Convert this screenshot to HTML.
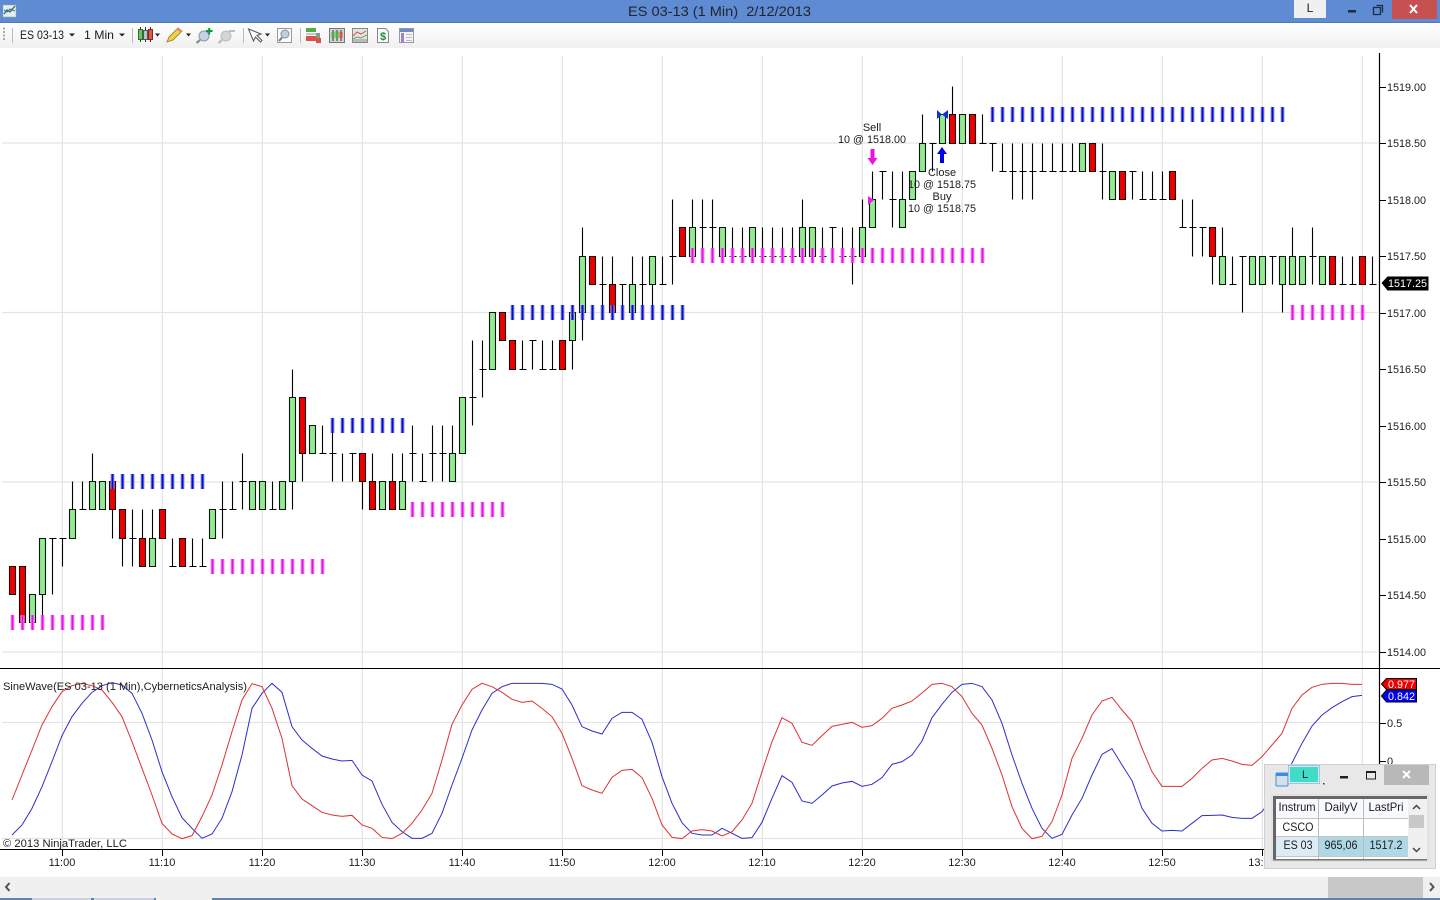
<!DOCTYPE html>
<html lang="en">
<head>
<meta charset="utf-8">
<title>ES 03-13 (1 Min) 2/12/2013</title>
<style>
html,body{margin:0;padding:0;background:#fff;width:1440px;height:900px;overflow:hidden}
svg{position:absolute;left:0;top:0;display:block}
text{font-family:"Liberation Sans",Arial,sans-serif;font-size:11px;fill:#1c1c1c}
.p text{font-size:11px;fill:#1c1c1c}
.t text{font-size:11px;fill:#1c1c1c;text-anchor:middle}
.a text{font-size:11px;fill:#1c1c1c;text-anchor:middle}
.w text{font-size:12px;fill:#1c1c1c;text-anchor:middle}
</style>
</head>
<body>
<svg width="1440" height="900" viewBox="0 0 1440 900" xmlns="http://www.w3.org/2000/svg">
<defs>
<linearGradient id="tb" x1="0" y1="0" x2="0" y2="1"><stop offset="0" stop-color="#ffffff"/><stop offset="1" stop-color="#f0f0f0"/></linearGradient>
</defs>

<!-- window chrome -->
<rect width="1440" height="900" fill="#fff"/>
<rect width="1440" height="22" fill="#5f8bd2"/>
<rect y="22" width="1440" height="1" fill="#5578b0"/>
<rect y="23" width="1440" height="25" fill="url(#tb)"/>
<text x="628" y="16" textLength="183" lengthAdjust="spacingAndGlyphs" style="font-size:14px;fill:#20262e">ES 03-13 (1 Min)&#160;&#160;2/12/2013</text>
<!-- app icon -->
<rect x="3" y="5" width="13" height="12" fill="#e8eef0" stroke="#8aa" stroke-width=".5"/>
<path d="M4 14l3-4 3 2 5-6" fill="none" stroke="#2f7f4f" stroke-width="1.4"/>
<path d="M4 10l3 2 3-3 5 2" fill="none" stroke="#3b6aa5" stroke-width="1"/>
<!-- title buttons -->
<rect x="1294" y="0" width="32" height="18" fill="#f0f0f0"/>
<text x="1310" y="12" text-anchor="middle" style="font-size:12px;fill:#222">L</text>
<rect x="1348" y="10" width="8" height="2.500" fill="#1d2b45"/>
<path d="M1376.500 5.500h6v7M1373.500 7.500h7v7h-7z" fill="none" stroke="#1d2b45" stroke-width="1.300"/>
<rect x="1392" y="0" width="45" height="19" fill="#c75050"/>
<path d="M1410 5l7 8M1417 5l-7 8" stroke="#fff" stroke-width="2" fill="none"/>

<!-- toolbar -->
<path d="M4 27.500v14" stroke="#aaa" stroke-width="2" stroke-dasharray="2 1.500" fill="none"/>
<path d="M12.500 28v15M132.500 28v15M243.500 28v15M300.500 28v15" stroke="#bbb" fill="none"/>
<text x="20" y="39" textLength="44" lengthAdjust="spacingAndGlyphs" style="font-size:12px">ES 03-13</text>
<path d="M69 33.500h6l-3 3z" fill="#222"/>
<text x="84" y="39" textLength="30" lengthAdjust="spacingAndGlyphs" style="font-size:12px">1 Min</text>
<path d="M119 33.500h6l-3 3z" fill="#222"/>
<!-- candles -->
<path d="M140.500 27v15M145.500 27v15M150.500 27v15" stroke="#333"/>
<rect x="138.500" y="29.500" width="4" height="10" fill="#62c95a" stroke="#2f6d2f"/>
<rect x="143.500" y="30.500" width="4" height="9" fill="#b9c4c9" stroke="#555"/>
<rect x="148.500" y="29.500" width="4" height="10" fill="#e4564a" stroke="#7a2a22"/>
<path d="M155 33.500h5l-2.500 3z" fill="#222"/>
<!-- pencil -->
<path d="M167 42l2-5 9-9 4 3-9 9z" fill="#f4d03f" stroke="#8a7a30" stroke-width=".8"/>
<path d="M178 28l4 3-1.500 1.500-4-3z" fill="#e58a7a"/>
<path d="M186 33.500h5l-2.500 3z" fill="#222"/>
<!-- zoom in -->
<circle cx="204" cy="36" r="5" fill="#c3d4e4" stroke="#8a9aaa"/>
<path d="M200 40l-3.500 3" stroke="#8a8f96" stroke-width="2.200"/>
<path d="M206 31h6.500M209.200 28v6.500" stroke="#0a9a3a" stroke-width="2"/>
<!-- zoom out -->
<circle cx="226" cy="36" r="5" fill="#d4d4d4" stroke="#bbb"/>
<path d="M222 40l-3.500 3" stroke="#bbb" stroke-width="2.200"/>
<path d="M229 31h6" stroke="#aaa" stroke-width="1.500"/>
<!-- arrow -->
<path d="M248.500 29l5 12 2-4 5 5 1.500-1.500-5-5 4-1.500z" fill="#fff" stroke="#555" stroke-width="1"/>
<path d="M265 33.500h5l-2.500 3z" fill="#222"/>
<!-- box magnifier -->
<rect x="277.500" y="28.500" width="14" height="14" fill="#fbfbfb" stroke="#999"/>
<circle cx="285" cy="34" r="4" fill="#bdd0e2" stroke="#7f93a8"/>
<path d="M282 37.500l-3 3.500" stroke="#777" stroke-width="2"/>
<!-- chart icons -->
<rect x="306" y="28" width="10" height="4" fill="#4fb04a"/>
<rect x="306" y="36" width="10" height="5" fill="#d9534a"/>
<path d="M306 34h10" stroke="#999"/>
<rect x="316" y="33" width="4" height="6" fill="#8a9a8a"/>
<rect x="316" y="38" width="5" height="5" fill="#d9534a"/>
<rect x="329.500" y="28.500" width="15" height="14" fill="#d4d4d4" stroke="#777"/>
<path d="M333 30v11M337 30v11M341 30v11" stroke="#333"/>
<rect x="331.500" y="32" width="3" height="6" fill="#4fb04a"/><rect x="335.500" y="31" width="3" height="7" fill="#4fb04a"/><rect x="339.500" y="32" width="3" height="6" fill="#d9534a"/>
<rect x="352.500" y="28.500" width="15" height="14" fill="#e4e4e4" stroke="#888"/>
<path d="M353 36l4-4 4 2 5-3" stroke="#d9534a" fill="none"/>
<path d="M353 39l4-2 4 1 6-3" stroke="#6aa86a" fill="none"/>
<rect x="353" y="39" width="14" height="3" fill="#bbb"/>
<path d="M377.500 28.500h8l3 3v11h-11z" fill="#fafafa" stroke="#888"/>
<text x="383" y="40" text-anchor="middle" style="font-size:11px;font-weight:bold;fill:#1c8a3a">$</text>
<rect x="399.500" y="28.500" width="14" height="14" fill="#f4f4f4" stroke="#99a"/>
<rect x="400" y="29" width="13" height="3" fill="#6a8ac8"/>
<rect x="401" y="33" width="3" height="9" fill="#a080d0"/>
<path d="M406 34.500h6M406 37.500h6M406 40.500h6" stroke="#bbb"/>

<!-- grid -->
<g stroke="#e4e4e4" stroke-width="1.200" fill="none">
<path d="M62.300 56V849M162.300 56V849M262.300 56V849M362.300 56V849M462.300 56V849M562.300 56V849M662.300 56V849M762.300 56V849M862.300 56V849M962.300 56V849M1062.300 56V849M1162.300 56V849M1262.300 56V849M1362.300 56V849"/>
<path d="M2 143H1378M2 312.500H1378M2 482H1378M2 652H1378M2 722.500H1378M2 838.500H1378"/>
</g>

<!-- bars -->
<g transform="translate(.5 .5)">
<path fill="none" stroke="#000" stroke-width="1.100" d="M42 538V622M52 538V594M49 538h7M62 538V566M59 538h7M72 481V509M82 481V509M79 509h7M92 453V481M112 509V538M122 538V566M132 509V566M129 538h7M142 509V538M152 509V538M172 538V566M169 566h7M192 538V566M189 566h7M202 538V566M199 566h7M222 481V538M219 509h7M232 481V509M229 509h7M242 453V509M239 481h7M272 481V509M269 509h7M292 369V397M292 481V509M302 453V481M322 425V453M319 453h7M332 425V481M329 453h7M342 453V481M352 453V481M349 453h7M362 481V509M372 453V481M392 453V481M402 453V481M412 425V481M409 453h7M422 453V481M419 481h7M432 425V481M429 453h7M442 425V481M439 453h7M452 425V453M472 340V425M469 397h7M482 340V397M479 369h7M522 340V369M519 369h7M532 340V369M529 340h7M542 340V369M539 369h7M552 340V369M549 369h7M572 340V369M582 227V256M582 312V340M602 256V312M599 284h7M612 256V284M622 284V312M619 284h7M632 256V284M642 256V312M639 284h7M652 284V312M662 256V284M659 284h7M672 199V284M669 256h7M692 199V227M702 199V256M699 227h7M712 199V256M709 227h7M732 227V256M729 256h7M742 227V256M739 256h7M762 227V256M759 256h7M772 227V256M769 256h7M782 227V256M779 256h7M792 227V256M789 256h7M802 199V227M822 227V256M819 256h7M832 227V256M829 227h7M842 227V256M839 256h7M852 227V284M849 256h7M862 199V227M872 171V199M882 171V199M879 171h7M892 171V227M889 199h7M902 171V199M922 114V143M932 143V171M929 143h7M952 86V114M982 114V143M979 143h7M992 143V171M989 143h7M1002 143V171M999 171h7M1012 143V199M1009 171h7M1022 143V199M1019 171h7M1032 143V199M1029 171h7M1042 143V171M1039 171h7M1052 143V171M1049 171h7M1062 143V171M1059 171h7M1072 143V171M1069 171h7M1102 143V199M1099 171h7M1132 171V199M1129 171h7M1142 171V199M1139 199h7M1152 171V199M1149 199h7M1162 171V199M1159 199h7M1182 199V227M1179 227h7M1192 199V256M1189 227h7M1202 227V256M1199 227h7M1212 256V284M1222 227V256M1232 256V284M1229 284h7M1242 256V312M1239 256h7M1272 256V284M1269 256h7M1282 284V312M1292 227V256M1312 227V284M1309 256h7M1342 256V284M1339 284h7M1352 256V284M1349 284h7M1372 256V284M1369 284h7"/>
<path fill="#ee0000" stroke="#1a0000" stroke-width="1.100" d="M9 566h6V594h-6zM19 566h6V622h-6zM109 481h6V509h-6zM119 509h6V538h-6zM139 538h6V566h-6zM159 509h6V538h-6zM179 538h6V566h-6zM299 397h6V453h-6zM359 453h6V481h-6zM369 481h6V509h-6zM389 481h6V509h-6zM499 312h6V340h-6zM509 340h6V369h-6zM559 340h6V369h-6zM589 256h6V284h-6zM609 284h6V312h-6zM679 227h6V256h-6zM949 114h6V143h-6zM969 114h6V143h-6zM1089 143h6V171h-6zM1119 171h6V199h-6zM1169 171h6V199h-6zM1209 227h6V256h-6zM1329 256h6V284h-6zM1359 256h6V284h-6z"/>
<path fill="#93ea93" stroke="#0a1a0a" stroke-width="1.100" d="M29 594h6V622h-6zM39 538h6V594h-6zM69 509h6V538h-6zM89 481h6V509h-6zM99 481h6V509h-6zM149 538h6V566h-6zM209 509h6V538h-6zM249 481h6V509h-6zM259 481h6V509h-6zM279 481h6V509h-6zM289 397h6V481h-6zM309 425h6V453h-6zM379 481h6V509h-6zM399 481h6V509h-6zM449 453h6V481h-6zM459 397h6V453h-6zM489 312h6V369h-6zM569 312h6V340h-6zM579 256h6V312h-6zM629 284h6V312h-6zM649 256h6V284h-6zM689 227h6V256h-6zM719 227h6V256h-6zM749 227h6V256h-6zM799 227h6V256h-6zM809 227h6V256h-6zM859 227h6V256h-6zM869 199h6V227h-6zM899 199h6V227h-6zM909 171h6V199h-6zM919 143h6V171h-6zM939 114h6V143h-6zM959 114h6V143h-6zM1079 143h6V171h-6zM1109 171h6V199h-6zM1219 256h6V284h-6zM1249 256h6V284h-6zM1259 256h6V284h-6zM1279 256h6V284h-6zM1289 256h6V284h-6zM1299 256h6V284h-6zM1319 256h6V284h-6z"/>
</g>

<!-- dash markers -->
<g fill="none" stroke-width="15" stroke-dasharray="4 6" stroke="#f4a0f4">
<path d="M10.500 622.500H106"/><path d="M210.500 566.500H326"/><path d="M410.500 509.500H506"/><path d="M690.500 255.500H986"/><path d="M1290.500 312.500H1366"/>
</g>
<g fill="none" stroke-width="15" stroke-dasharray="2 8" stroke="#e512e5">
<path d="M11.500 622.500H106"/><path d="M211.500 566.500H326"/><path d="M411.500 509.500H506"/><path d="M691.500 255.500H986"/><path d="M1291.500 312.500H1366"/>
</g>
<g fill="none" stroke-width="15" stroke-dasharray="4 6" stroke="#a4a4f2">
<path d="M110.500 481.500H206"/><path d="M330.500 425.500H406"/><path d="M510.500 312.500H686"/><path d="M990.500 114.500H1286"/>
</g>
<g fill="none" stroke-width="15" stroke-dasharray="2 8" stroke="#000cd0">
<path d="M111.500 481.500H206"/><path d="M331.500 425.500H406"/><path d="M511.500 312.500H686"/><path d="M991.500 114.500H1286"/>
</g>

<!-- annotations -->
<g class="t">
<text x="872" y="131">Sell</text>
<text x="872" y="143" textLength="68" lengthAdjust="spacingAndGlyphs">10 @ 1518.00</text>
<text x="942" y="176">Close</text>
<text x="942" y="188" textLength="68" lengthAdjust="spacingAndGlyphs">10 @ 1518.75</text>
<text x="942" y="200">Buy</text>
<text x="942" y="212" textLength="68" lengthAdjust="spacingAndGlyphs">10 @ 1518.75</text>
</g>
<path d="M870.500 149h4v9h3l-5 7-5-7h3z" fill="#f010e0"/>
<path d="M940 163v-9h-3l5-7 5 7h-3v9z" fill="#0000ee"/>
<path d="M937 110l5 4.500 6-4.500v9l-6-4.500-5 4.500z" fill="#1030e0"/>
<path d="M868 196l6 4-6 5z" fill="#e820e8"/>

<!-- axes -->
<g stroke="#000" fill="none">
<path d="M1379.500 53V770" stroke-width="1.200"/>
<path d="M0 668.500H1440M0 849.500H1300" stroke-width="1.100"/>
<path d="M1379 87.500h7M1379 143.500h7M1379 200.500h7M1379 256.500h7M1379 313.500h7M1379 369.500h7M1379 426.500h7M1379 482.500h7M1379 539.500h7M1379 595.500h7M1379 652.500h7M1379 723.500h7M1379 761.500h7"/>
<path d="M62.500 850v6M162.500 850v6M262.500 850v6M362.500 850v6M462.500 850v6M562.500 850v6M662.500 850v6M762.500 850v6M862.500 850v6M962.500 850v6M1062.500 850v6M1162.500 850v6M1262.500 850v6"/>
</g>
<g class="p">
<text x="1387" y="91" textLength="39" lengthAdjust="spacingAndGlyphs">1519.00</text>
<text x="1387" y="147" textLength="39" lengthAdjust="spacingAndGlyphs">1518.50</text>
<text x="1387" y="204" textLength="39" lengthAdjust="spacingAndGlyphs">1518.00</text>
<text x="1387" y="260" textLength="39" lengthAdjust="spacingAndGlyphs">1517.50</text>
<text x="1387" y="317" textLength="39" lengthAdjust="spacingAndGlyphs">1517.00</text>
<text x="1387" y="373" textLength="39" lengthAdjust="spacingAndGlyphs">1516.50</text>
<text x="1387" y="430" textLength="39" lengthAdjust="spacingAndGlyphs">1516.00</text>
<text x="1387" y="486" textLength="39" lengthAdjust="spacingAndGlyphs">1515.50</text>
<text x="1387" y="543" textLength="39" lengthAdjust="spacingAndGlyphs">1515.00</text>
<text x="1387" y="599" textLength="39" lengthAdjust="spacingAndGlyphs">1514.50</text>
<text x="1387" y="656" textLength="39" lengthAdjust="spacingAndGlyphs">1514.00</text>
<text x="1387" y="727">0.5</text>
<text x="1387" y="765">0</text>
</g>
<g class="a">
<text x="62" y="866">11:00</text><text x="162" y="866">11:10</text><text x="262" y="866">11:20</text><text x="362" y="866">11:30</text><text x="462" y="866">11:40</text><text x="562" y="866">11:50</text><text x="662" y="866">12:00</text><text x="762" y="866">12:10</text><text x="862" y="866">12:20</text><text x="962" y="866">12:30</text><text x="1062" y="866">12:40</text><text x="1162" y="866">12:50</text><text x="1262" y="866">13:00</text>
</g>

<!-- indicator lines -->
<g transform="translate(0 665) scale(1 .33333)" fill="none">
<polyline vector-effect="non-scaling-stroke" stroke="#2e2ecb" stroke-width="1" points="12,510 22,480 32,430 42,365 52,290 62,212 72,155 82,115 92,82 102,62 112,53 122,60 132,85 142,145 152,225 162,320 172,395 182,458 192,490 202,520 212,507 222,460 232,380 242,270 252,130 262,85 272,55 282,82 292,185 302,225 312,250 322,273 332,282 342,288 352,286 362,330 372,348 382,418 392,472 402,500 412,520 422,520 432,505 442,445 452,360 462,280 472,195 482,135 492,85 502,65 512,55 522,55 532,55 542,55 552,58 562,72 572,120 582,185 592,198 602,207 612,160 622,142 632,142 642,163 652,232 662,335 672,415 682,473 692,505 702,510 712,510 722,490 732,505 742,520 752,518 762,472 772,400 782,332 792,352 802,408 812,415 822,390 832,363 842,354 852,349 862,364 872,358 882,338 892,298 902,290 912,270 922,228 932,158 942,118 952,82 962,58 972,55 982,65 992,105 1002,175 1012,270 1022,355 1032,430 1042,490 1052,520 1062,508 1072,450 1082,400 1092,330 1102,268 1112,251 1122,300 1132,347 1142,430 1152,475 1162,498 1172,496 1182,498 1192,475 1202,452 1212,451 1222,450 1232,457 1242,460 1252,460 1262,440 1272,400 1282,340 1292,294 1302,235 1312,183 1322,150 1332,128 1342,110 1352,95 1362,91"/>
<polyline vector-effect="non-scaling-stroke" stroke="#dc3232" stroke-width="1" points="12,405 22,330 32,255 42,180 52,125 62,80 72,62 82,55 92,62 102,75 112,112 122,155 132,230 142,310 152,390 162,475 172,507 182,521 192,512 202,455 212,390 222,300 232,200 242,105 252,56 262,65 272,130 282,220 292,362 302,402 312,422 322,442 332,450 342,454 352,451 362,480 372,490 382,517 392,521 402,505 412,475 422,435 432,385 442,285 452,178 462,120 472,73 482,55 492,65 502,82 512,103 522,112 532,108 542,130 552,155 562,205 572,280 582,362 592,375 602,385 612,337 622,316 632,313 642,338 652,400 662,480 672,517 682,521 692,498 702,494 712,498 722,513 732,500 742,465 752,415 762,320 772,230 782,158 792,175 802,232 812,241 822,212 832,184 842,178 852,172 862,187 872,182 882,160 892,130 902,120 912,108 922,84 932,58 942,55 952,65 962,95 972,145 982,180 992,250 1002,330 1012,425 1022,490 1032,521 1042,514 1052,470 1062,390 1072,280 1082,220 1092,150 1102,108 1112,97 1122,135 1132,170 1142,250 1152,320 1162,364 1172,364 1182,364 1192,340 1202,310 1212,285 1222,280 1232,288 1242,298 1252,301 1262,275 1272,240 1282,205 1292,130 1302,90 1312,67 1322,58 1332,55 1342,55 1352,58 1362,58"/>
</g>
<text x="3" y="690" textLength="244" lengthAdjust="spacingAndGlyphs">SineWave(ES 03-13 (1 Min),CyberneticsAnalysis)</text>
<text x="3" y="847" textLength="124" lengthAdjust="spacingAndGlyphs">© 2013 NinjaTrader, LLC</text>

<!-- last price labels -->
<path d="M1381.500 283l6-6.500h41v14h-41z" fill="#000"/>
<text x="1388" y="287" textLength="39" lengthAdjust="spacingAndGlyphs" style="fill:#fff">1517.25</text>
<path d="M1381.500 684l5-5.500h30v11h-30z" fill="#ee0000" stroke="#000"/>
<text x="1388" y="688" textLength="27" lengthAdjust="spacingAndGlyphs" style="fill:#fff">0.977</text>
<path d="M1381.500 696l5-6h30v12h-30z" fill="#0000ee" stroke="#000"/>
<text x="1388" y="700" textLength="27" lengthAdjust="spacingAndGlyphs" style="fill:#fff">0.842</text>

<!-- scrollbar -->
<rect y="877" width="1440" height="21" fill="#f0f0f0"/>
<rect x="1328" y="877" width="95" height="21" fill="#c8c8c8"/>
<path d="M9.500 883l-3.500 4 3.500 4" fill="none" stroke="#555" stroke-width="2"/>
<path d="M1430 883l3.500 4-3.500 4" fill="none" stroke="#555" stroke-width="2"/>
<rect y="898" width="1440" height="2" fill="#5f82b8"/>
<rect x="32" y="898" width="59" height="2" fill="#c8d4e4"/>
<rect x="94" y="898" width="60" height="2" fill="#c8d4e4"/>
<rect x="156" y="898" width="56" height="2" fill="#f0f0f0"/>

<!-- floating widget -->
<rect x="1264.500" y="764.500" width="171" height="104" fill="#e8e8e8" stroke="#cfcfcf"/>
<rect x="1276" y="773" width="12" height="13" rx="1" fill="#d8dfea" stroke="#3a90e0"/>
<rect x="1276" y="773" width="12" height="3" fill="#3a90e0"/>
<rect x="1288.500" y="765.500" width="31" height="18" fill="#d8e8f4" stroke="#9cc4e4"/>
<rect x="1290" y="767" width="28" height="15" fill="#40dcc8"/>
<text x="1305" y="778" text-anchor="middle" style="font-size:11px">L</text>
<rect x="1323" y="783" width="1.500" height="1.500" fill="#335"/>
<rect x="1340" y="776" width="8" height="2.500" fill="#222"/>
<rect x="1366.500" y="771.500" width="9" height="7.500" fill="none" stroke="#222"/>
<rect x="1366" y="771" width="10" height="2" fill="#222"/>
<rect x="1384" y="765" width="45" height="20" fill="#b8b8b8"/>
<path d="M1403 771l7 7M1410 771l-7 7" stroke="#fff" stroke-width="2" fill="none"/>

<!-- grid widget -->
<rect x="1272" y="795" width="156" height="66" fill="#f0f0f0" stroke="#d8d8d8"/>
<rect x="1273" y="796" width="154" height="3" fill="#666"/>
<rect x="1273" y="796" width="3" height="63" fill="#666"/>
<rect x="1276" y="799" width="132" height="58" fill="#fff"/>
<rect x="1276" y="799" width="132" height="19" fill="#f8f8ff"/>
<rect x="1276" y="837" width="42" height="20" fill="#dcecf5"/>
<rect x="1319" y="837" width="89" height="20" fill="#aed8e6"/>
<path d="M1318.500 799V860M1363.500 799V860" stroke="#bbb"/>
<path d="M1276 818.500H1408M1276 836.500H1408M1276 856.500H1408" stroke="#c4c4c4"/>
<rect x="1276" y="857" width="132" height="2" fill="#fff"/>
<path d="M1318.500 857V859M1363.500 857V859" stroke="#bbb"/>
<rect x="1273" y="859" width="154" height="1.500" fill="#777"/>
<g class="w">
<text x="1297" y="811" textLength="37" lengthAdjust="spacingAndGlyphs">Instrum</text>
<text x="1341" y="811" textLength="33" lengthAdjust="spacingAndGlyphs">DailyV</text>
<text x="1386" y="811" textLength="35" lengthAdjust="spacingAndGlyphs">LastPri</text>
<text x="1298" y="831" textLength="31" lengthAdjust="spacingAndGlyphs">CSCO</text>
<text x="1298" y="849" textLength="29" lengthAdjust="spacingAndGlyphs">ES 03</text>
<text x="1341" y="849" textLength="33" lengthAdjust="spacingAndGlyphs">965,06</text>
<text x="1386" y="849" textLength="33" lengthAdjust="spacingAndGlyphs">1517.2</text>
</g>
<rect x="1408" y="799" width="16" height="58" fill="#f0f0f0"/>
<rect x="1409" y="815" width="15" height="13" fill="#c8c8c8"/>
<path d="M1413 809l3.500-3.500 3.500 3.500M1413 848l3.500 3.500 3.500-3.500" fill="none" stroke="#444" stroke-width="1.500"/>
</svg>
</body>
</html>
